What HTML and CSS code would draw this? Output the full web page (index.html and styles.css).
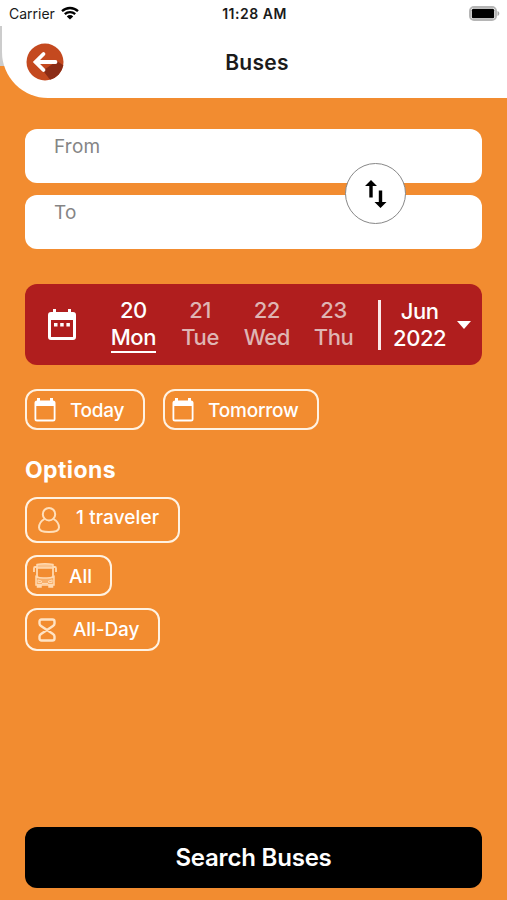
FILE: index.html
```html
<!DOCTYPE html>
<html lang="en">

<head>
    <meta charset="UTF-8">
    <meta name="viewport" content="width=device-width, initial-scale=1.0">
    <title>Buses</title>
    <link rel="stylesheet" href="styles.css">
</head>

<body>
    <div class="app">
        <!-- status bar -->
        <div class="status">
            <div class="carrier">
                <span>Carrier</span>
                <svg class="wifi" viewBox="0 0 18 14">
                    <path d="M1 5.2a11.6 11.6 0 0 1 16 0M3.8 8.2a7.6 7.6 0 0 1 10.4 0" fill="none" stroke="#000" stroke-width="2.3" />
                    <path d="M9 13.6L5.8 10.4a4.6 4.6 0 0 1 6.4 0z" />
                </svg>
            </div>
            <div class="time">11:28 AM</div>
            <svg class="battery" viewBox="0 0 31 15">
                <rect x="1" y="1" width="26" height="13" rx="4" fill="#fff" stroke="#b5b5b5" stroke-width="2" />
                <rect x="2.8" y="2.8" width="22.4" height="9.4" rx="1.5" />
                <path d="M28.5 5c2.4.8 2.4 4.2 0 5z" fill="#a5a5a5" />
            </svg>
        </div>

        <!-- header -->
        <div class="header-wrap">
            <header class="header">
                <a href="#" class="back">
                    <svg viewBox="0 0 38 38">
                        <circle cx="19" cy="19" r="18.5" fill="#c4491f" />
                        <path d="M17 27.5L31 18l6.3 4.3A18.5 18.5 0 0 1 24 36.8z" fill="#8b2c16" />
                        <path d="M17.5 11L9.500 19l8 8M9.500 19H29.500" fill="none" stroke="#fff" stroke-width="3.8" stroke-linecap="round" />
                    </svg>
                </a>
                <h1>Buses</h1>
            </header>
        </div>

        <main>
            <!-- from / to -->
            <div class="route">
                <div class="field">From</div>
                <div class="field">To</div>
                <a href="#" class="swap">
                    <svg viewBox="0 0 22 28">
                        <path d="M6 0l6 6H7.7v11.500H4.300V6H0zM15.500 28l-6-6h4.300V10.500h3.400V22h4.300z" />
                    </svg>
                </a>
            </div>

            <!-- date picker -->
            <div class="dates">
                <svg class="cal" viewBox="0 0 28 31">
                    <path d="M5 0h3v3h12V0h3v3h2a3 3 0 0 1 3 3v22a3 3 0 0 1-3 3H3a3 3 0 0 1-3-3V6a3 3 0 0 1 3-3h2zM3 11v17h22V11zM6 14h3.500v3.500H6zM12.200 14h3.500v3.500h-3.500zM18.400 14h3.500v3.500h-3.500z" fill="#fff" fill-rule="evenodd" />
                </svg>
                <ul class="days">
                    <li class="cur">20<span>Mon</span></li>
                    <li>21<span>Tue</span></li>
                    <li>22<span>Wed</span></li>
                    <li>23<span>Thu</span></li>
                </ul>
                <div class="month">
                    <div>Jun<br>2022</div>
                    <svg class="caret" viewBox="0 0 14 8">
                        <path d="M0 0h14L7 8z" fill="#fff" />
                    </svg>
                </div>
            </div>

            <div class="quick">
                <a href="#" class="chip today">
                    <svg class="small-cal" viewBox="0 0 22 24">
                        <path d="M3 0h3v2.500h10V0h3v2.500a2.500 2.500 0 0 1 2.500 2.500v16a2.500 2.500 0 0 1-2.500 2.500H3A2.500 2.500 0 0 1 .5 21V5A2.500 2.500 0 0 1 3 2.500zM2.300 8v13.500h17.400V8z" fill="#fff" fill-rule="evenodd" />
                    </svg>
                    <span>Today</span>
                </a>
                <a href="#" class="chip tomorrow">
                    <svg class="small-cal" viewBox="0 0 22 24">
                        <path d="M3 0h3v2.500h10V0h3v2.500a2.500 2.500 0 0 1 2.500 2.500v16a2.500 2.500 0 0 1-2.500 2.500H3A2.500 2.500 0 0 1 .5 21V5A2.500 2.500 0 0 1 3 2.500zM2.300 8v13.500h17.400V8z" fill="#fff" fill-rule="evenodd" />
                    </svg>
                    <span>Tomorrow</span>
                </a>
            </div>

            <h2>Options</h2>
            <div class="options">
                <a href="#" class="chip traveler">
                    <svg class="person" viewBox="0 0 22 26" fill="none" stroke="#ffdfba" stroke-width="2">
                        <circle cx="11" cy="7.2" r="6.2" />
                        <path d="M6.500 12C3 14 1 17 1 20.500c0 3 4 4.500 10 4.500s10-1.500 10-4.500c0-3.500-2-6.500-5.500-8.500" />
                    </svg>
                    <span>1 traveler</span>
                </a>
                <a href="#" class="chip all">
                    <svg class="bus" viewBox="0 0 24 25" fill="none" stroke="#ffd9b0" stroke-width="1.5">
                        <path d="M4 1.500Q12 0 20 1.500V5H4z" fill="#ffd9b0" fill-opacity=".7" />
                        <path d="M4 4H2Q1 4 1 5.500V9M20 4h2q1 0 1 1.500V9M4 5v9M20 5v9" stroke-width="1.8" />
                        <path d="M3 13.500q4.500 2 9 1.500q4.500.5 9-1.500V22H3z" fill="#ffd9b0" fill-opacity=".45" />
                        <path d="M5 17l3.500 1v1.500H5zM19 17l-3.500 1v1.500H19zM9 20.500h6" stroke-width="1" />
                        <path d="M4.500 22h3.500v2H4.500zM16 22h3.500v2H16z" fill="#ffd9b0" />
                    </svg>
                    <span>All</span>
                </a>
                <a href="#" class="chip all-day">
                    <svg class="hourglass" viewBox="0 0 18 24" fill="none" stroke="#ffe3c4" stroke-width="2.4" stroke-linejoin="round">
                        <path d="M3.500 1.500h11q2 0 2 2v2q0 1.500-1.500 2.500L9 12 3 8Q1.500 7 1.500 5.500v-2q0-2 2-2zM9 12l6 4q1.500 1 1.500 2.500v2q0 2-2 2h-11q-2 0-2-2v-2Q1.500 17 3 16z" />
                    </svg>
                    <span>All-Day</span>
                </a>
            </div>
        </main>

        <a href="#" class="search">Search Buses</a>
    </div>
</body>

</html>
```
FILE: styles.css
```css
* {
    margin: 0;
    padding: 0;
    box-sizing: border-box;
}

body {
    font-family: Inter, "Liberation Sans", sans-serif;
    color: #fff;
}

a {
    color: inherit;
    text-decoration: none;
}

ul {
    list-style: none;
}

svg {
    display: block;
    flex: none;
}

.app {
    width: 507px;
    height: 900px;
    display: flex;
    flex-direction: column;
    background: #f28c30;
    overflow: hidden;
}

/* status bar */
.status {
    height: 26px;
    padding: 0 7px 0 9px;
    display: grid;
    grid-template-columns: 1fr auto 1fr;
    align-items: center;
    background: #fff;
    color: #1a1a1a;
    font-size: 14px;
}

.carrier {
    display: flex;
    align-items: center;
    gap: 6px;
}

.wifi {
    width: 18px;
    height: 14px;
}

.time {
    font-weight: 600;
    letter-spacing: 0.5px;
}

.battery {
    width: 31px;
    height: 15px;
    justify-self: end;
}

/* header */
.header-wrap {
    padding-left: 2px;
    background: linear-gradient(#ccc, #ccc) no-repeat 0 0 / 12px 40px;
}

.header {
    height: 72px;
    display: grid;
    grid-template-columns: 38px 1fr 38px;
    align-items: center;
    padding: 0 19px 0 24px;
    background: #fff;
    border-bottom-left-radius: 46px;
}

.back svg {
    width: 38px;
    height: 38px;
}

.header h1 {
    color: #1b1b1b;
    font-size: 21px;
    font-weight: 600;
    letter-spacing: 0.3px;
    text-align: center;
}

main {
    flex: 1;
    padding: 31px 25px 0;
}

/* from / to */
.route {
    position: relative;
    display: grid;
    gap: 12px;
}

.field {
    height: 54px;
    padding: 5px 29px;
    border-radius: 12px;
    background: #fff;
    color: #858585;
    font-size: 19px;
    line-height: 25px;
    letter-spacing: 0.2px;
}

/* swap button sits over both fields */
.swap {
    position: absolute;
    top: 34px;
    right: 76px;
    width: 61px;
    height: 61px;
    display: flex;
    justify-content: center;
    align-items: center;
    border: 1px solid #888;
    border-radius: 50%;
    background: #fff;
}

.swap svg {
    width: 22px;
    height: 28px;
}

/* date picker */
.dates {
    height: 81px;
    margin-top: 35px;
    padding-left: 23px;
    display: flex;
    align-items: center;
    border-radius: 12px;
    background: #b01e1e;
    font-size: 22px;
    font-weight: 500;
    line-height: 27px;
    letter-spacing: -0.4px;
    text-align: center;
}

.cal {
    width: 28px;
    height: 31px;
}

.days {
    width: 267px;
    margin-left: 24px;
    display: grid;
    grid-template-columns: repeat(4, 1fr);
}

.days li {
    color: #dfb5b3;
}

.days li span {
    width: 45px;
    margin: 0 auto;
    display: flex;
    justify-content: center;
}

.days li.cur {
    color: #fff;
}

.days li.cur span {
    height: 29px;
    border-bottom: 2px solid #fff;
}

.month {
    height: 50px;
    margin-left: 11px;
    padding-left: 12px;
    display: flex;
    align-items: center;
    gap: 11px;
    border-left: 3px solid #fbe9e9;
}

.caret {
    width: 14px;
    height: 8px;
}

/* chips */
.quick {
    display: flex;
    gap: 18px;
    margin-top: 24px;
}

.chip {
    display: flex;
    align-items: center;
    border: 2px solid #fff2e2;
    border-radius: 12px;
    font-size: 19px;
    font-weight: 500;
    line-height: 24px;
    white-space: nowrap;
}

.small-cal {
    width: 22px;
    height: 24px;
    margin-right: 14px;
}

.today {
    width: 120px;
    height: 41px;
    padding-left: 7px;
    letter-spacing: -0.3px;
}

.today span,
.tomorrow span {
    padding-top: 2px;
}

.tomorrow {
    width: 156px;
    height: 41px;
    padding-left: 7px;
    letter-spacing: -0.2px;
}

h2 {
    margin-top: 25px;
    font-size: 23px;
    font-weight: 700;
    line-height: 30px;
    letter-spacing: 0.4px;
}

.options {
    display: flex;
    flex-direction: column;
    align-items: flex-start;
    gap: 12px;
    margin-top: 12px;
}

.traveler {
    width: 155px;
    height: 46px;
    padding-left: 11px;
    letter-spacing: 0.1px;
}

.traveler span {
    padding-bottom: 4px;
}

.person {
    width: 22px;
    height: 26px;
    margin-right: 16px;
}

.all {
    width: 87px;
    height: 41px;
    padding-left: 6px;
}

.all span {
    padding-top: 2px;
}

.bus {
    width: 24px;
    height: 25px;
    margin-right: 12px;
}

.all-day {
    width: 135px;
    height: 43px;
    padding-left: 11px;
    letter-spacing: -0.1px;
}

.hourglass {
    width: 18px;
    height: 24px;
    margin-right: 17px;
}

.search {
    height: 61px;
    margin: 0 25px 12px;
    display: flex;
    justify-content: center;
    align-items: center;
    border-radius: 12px;
    background: #000;
    font-size: 24px;
    font-weight: 600;
    letter-spacing: -0.2px;
}
```
